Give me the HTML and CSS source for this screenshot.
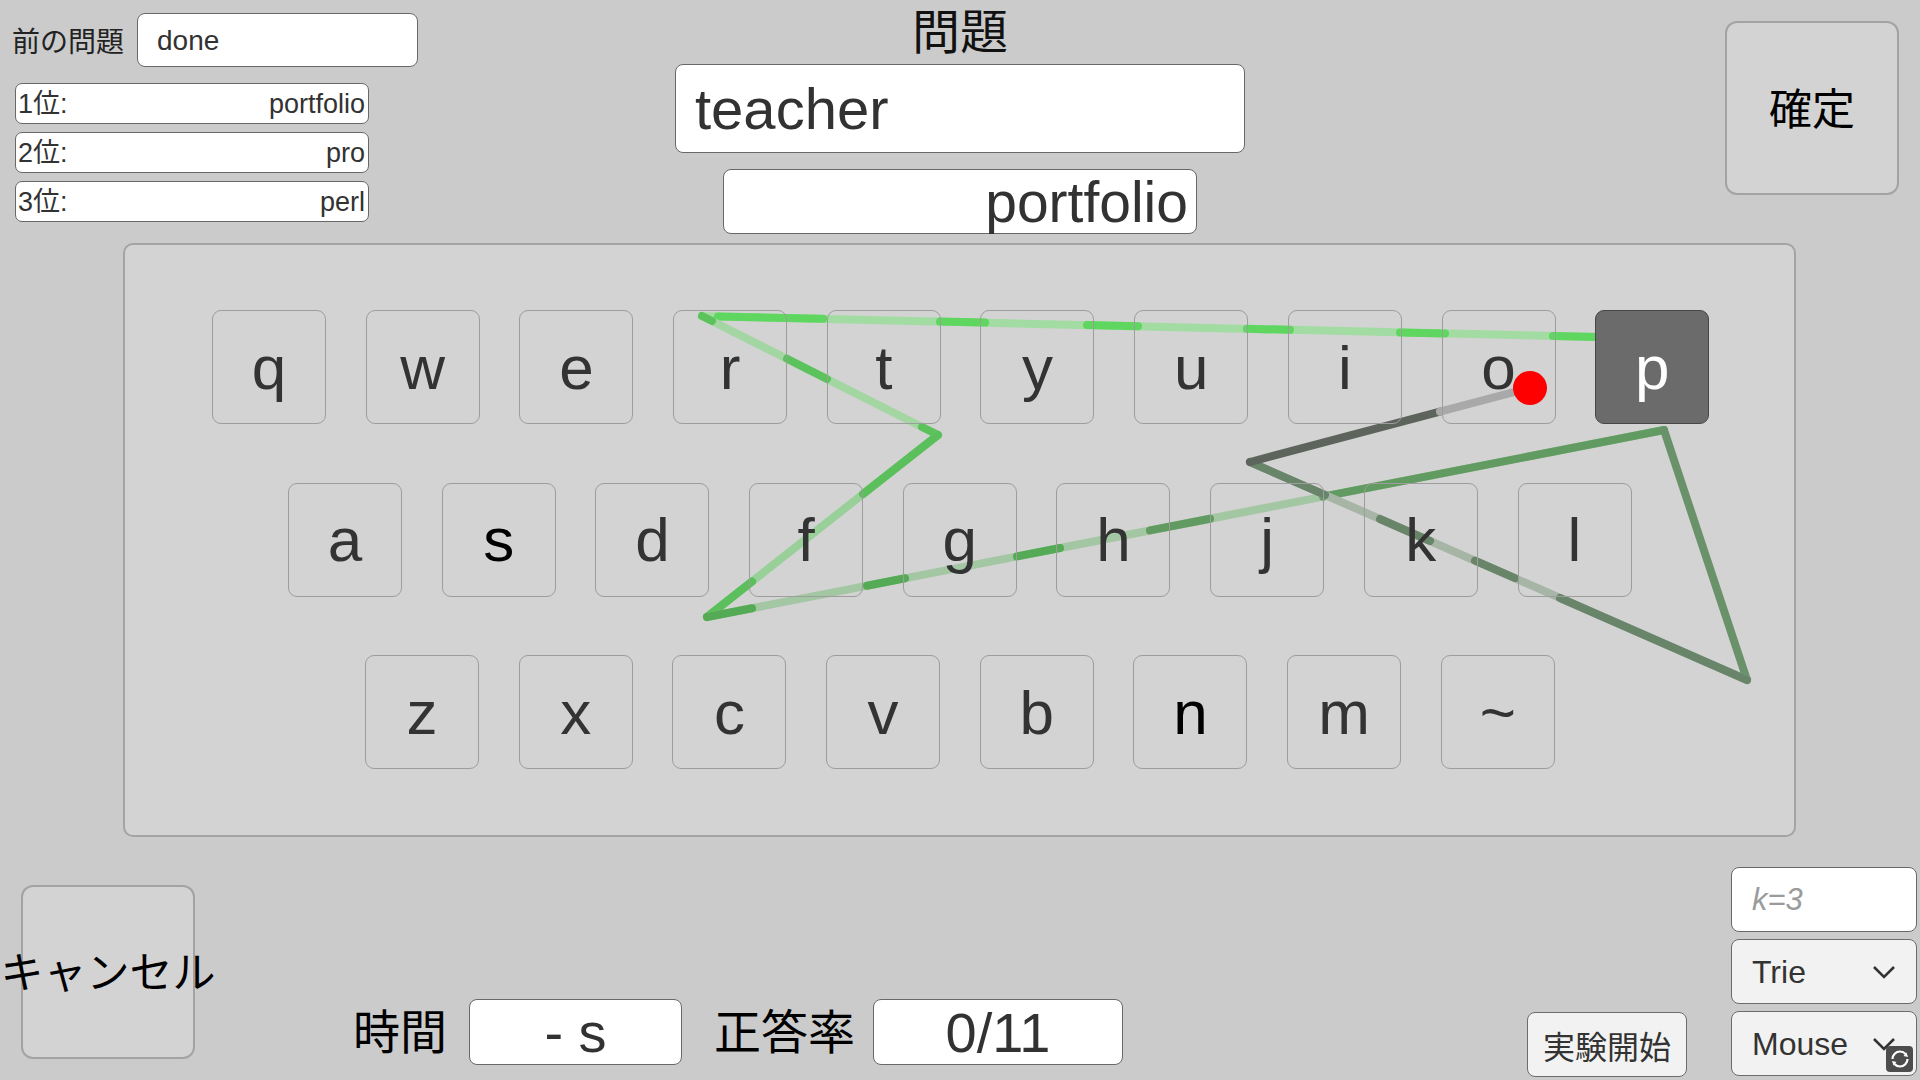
FILE: index.html
```html
<!DOCTYPE html>
<html lang="ja">
<head>
<meta charset="utf-8">
<title>Gesture Keyboard</title>
<link rel="stylesheet" href="styles.css">
</head>
<body>
<div class="screen">
  <header class="top">
    <section class="left-col">
      <div class="prev-row">
        <span class="prev-label">前の問題</span>
        <div class="field prev-field">done</div>
      </div>
      <ul class="ranks">
        <li class="field rank"><span>1位:</span><span>portfolio</span></li>
        <li class="field rank"><span>2位:</span><span>pro</span></li>
        <li class="field rank"><span>3位:</span><span>perl</span></li>
      </ul>
    </section>
    <section class="center-col">
      <h1 class="q-title">問題</h1>
      <div class="field q-field">teacher</div>
      <div class="field a-field">portfolio</div>
    </section>
    <section class="right-col">
      <button class="big-btn confirm">確定</button>
    </section>
  </header>

  <main class="kb-panel">
    <svg class="trail" viewBox="123 243 1673 594" width="1673" height="594" fill="none" stroke-linecap="round" stroke-linejoin="round" stroke-width="8">
      <!-- top row sweep -->
      <path d="M702 316L1630 337.8" stroke="#a2dca2"/>
      <path d="M718 316.4L823 318.8M940 321.6L985 322.6M1087 325L1138 326.2M1247 328.8L1290 329.8M1400 332.4L1445 333.4M1553 336L1630 337.8" stroke="#5fd65f"/>
      <!-- r to t/y -->
      <path d="M702 316L938 435" stroke="#a4d6a4"/>
      <path d="M702 316L712 321M787 358.8L827 379M922 427L938 435" stroke="#5cc35c"/>
      <!-- down to f -->
      <path d="M938 435L707 617" stroke="#99d099"/>
      <path d="M938 435L863 494M752 581.5L707 617" stroke="#5bbf5b"/>
      <!-- f up to p -->
      <path d="M707 617L1664 430" stroke="#a3c6a3"/>
      <path d="M707 617L752 608.2M867 585.7L905 578.3M1017 556.4L1060 548" stroke="#55ab55"/>
      <path d="M1150 530.4L1210 518.7M1323 496.6L1664 430" stroke="#619b61"/>
      <!-- p down to right -->
      <path d="M1664 430L1747 680" stroke="#6a926a"/>
      <!-- back left to j/i -->
      <path d="M1747 680L1250 462" stroke="#a6b5a6"/>
      <path d="M1747 680L1560 598M1515 578.2L1475 560.7M1430 541L1380 519M1325 494.9L1250 462" stroke="#68856a"/>
      <!-- up to o -->
      <path d="M1250 462L1440 411.6" stroke="#5c645c"/>
      <path d="M1440 411.6L1529 388" stroke="#a9a9a9"/>
    </svg>
    <div class="kb-row r1">
      <div class="key">q</div><div class="key">w</div><div class="key">e</div><div class="key">r</div><div class="key">t</div><div class="key">y</div><div class="key">u</div><div class="key">i</div><div class="key">o</div><div class="key pressed">p</div>
    </div>
    <div class="kb-row r2">
      <div class="key">a</div><div class="key hot">s</div><div class="key">d</div><div class="key">f</div><div class="key">g</div><div class="key">h</div><div class="key">j</div><div class="key">k</div><div class="key">l</div>
    </div>
    <div class="kb-row r3">
      <div class="key">z</div><div class="key">x</div><div class="key">c</div><div class="key">v</div><div class="key">b</div><div class="key hot">n</div><div class="key">m</div><div class="key">~</div>
    </div>
    <span class="cursor-dot"></span>
  </main>

  <footer class="bottom">
    <button class="big-btn cancel">キャンセル</button>
    <div class="stats">
      <span class="stat-label">時間</span>
      <div class="field stat-box time-box">- s</div>
      <span class="stat-label rate-label">正答率</span>
      <div class="field stat-box rate-box">0/11</div>
    </div>
    <div class="spacer"></div>
    <button class="start-btn">実験開始</button>
    <div class="right-stack">
      <div class="field k-input"><span class="placeholder">k=3</span></div>
      <div class="dropdown">
        <span>Trie</span>
        <svg class="chev" viewBox="0 0 24 14" width="24" height="14"><path d="M2 2L12 12L22 2" fill="none" stroke="#333" stroke-width="2.6"/></svg>
      </div>
      <div class="dropdown mouse">
        <span>Mouse</span>
        <svg class="chev" viewBox="0 0 24 14" width="24" height="14"><path d="M2 2L12 12L22 2" fill="none" stroke="#333" stroke-width="2.6"/></svg>
        <span class="sync-icon">
          <svg viewBox="0 0 26 26" width="26" height="26"><circle cx="13" cy="13" r="7.5" fill="none" stroke="#fff" stroke-width="2.2" stroke-dasharray="18 5.5"/><path d="M19.5 6.5L21 11L16.5 10Z" fill="#fff"/><path d="M6.5 19.5L5 15L9.5 16Z" fill="#fff"/></svg>
        </span>
      </div>
    </div>
  </footer>
</div>
</body>
</html>
```

FILE: styles.css
```css
* {
  box-sizing: border-box;
  margin: 0;
  padding: 0;
}

html, body {
  width: 1920px;
  height: 1080px;
  overflow: hidden;
}

body {
  background: #cbcbcb;
  font-family: "Liberation Sans", "Noto Sans CJK JP", sans-serif;
  color: #000;
}

.screen {
  width: 1920px;
  height: 1080px;
  display: flex;
  flex-direction: column;
}

/* ---------- top ---------- */
.top {
  height: 243px;
  display: grid;
  grid-template-columns: 675px 570px 1fr;
}

.field {
  background: #fff;
  border: 1.5px solid #686868;
  border-radius: 8px;
  color: #323232;
  line-height: 1;
}

.left-col {
  padding: 13px 0 0 12px;
}

.prev-row {
  display: flex;
  align-items: center;
  gap: 13px;
}

.prev-label {
  font-size: 28px;
  color: #222;
  white-space: nowrap;
}

.prev-field {
  width: 281px;
  height: 54px;
  font-size: 28px;
  display: flex;
  align-items: center;
  padding: 2px 0 0 19px;
}

.ranks {
  list-style: none;
  margin: 16px 0 0 3px;
  width: 354px;
  display: flex;
  flex-direction: column;
  gap: 8px;
}

.rank {
  height: 41px;
  display: flex;
  align-items: center;
  justify-content: space-between;
  padding: 1px 3px 0 2px;
  font-size: 27px;
  border-radius: 7px;
}

.center-col {
  display: flex;
  flex-direction: column;
  align-items: center;
}

.q-title {
  font-size: 48px;
  font-weight: normal;
  line-height: 57px;
  height: 61px;
  padding-top: 4px;
  color: #111;
}

.q-field {
  width: 570px;
  height: 89px;
  margin-top: 3px;
  font-size: 58px;
  display: flex;
  align-items: center;
  padding: 0 0 0 19px;
}

.a-field {
  width: 474px;
  height: 65px;
  margin-top: 16px;
  font-size: 57px;
  display: flex;
  align-items: center;
  justify-content: flex-end;
  padding: 2px 8px 0 0;
}

.right-col {
  display: flex;
  justify-content: flex-end;
  align-items: flex-start;
  padding: 21px 21px 0 0;
}

.big-btn {
  background: #d3d3d3;
  border: 2px solid #a3a3a3;
  border-radius: 12px;
  font-family: inherit;
  color: #000;
  display: flex;
  align-items: center;
  justify-content: center;
  white-space: nowrap;
}

.confirm {
  width: 174px;
  height: 174px;
  font-size: 43px;
  padding-bottom: 4px;
}

/* ---------- keyboard ---------- */
.kb-panel {
  margin-left: 123px;
  width: 1673px;
  height: 594px;
  background: #d3d3d3;
  border: 2px solid #a4a4a4;
  border-radius: 10px;
  position: relative;
  padding-top: 65px;
  display: flex;
  flex-direction: column;
  gap: 58.5px;
}

.kb-row {
  display: flex;
  gap: 39.7px;
  position: relative;
  z-index: 1;
}

.r1 { padding-left: 87px; }
.r2 { padding-left: 163px; }
.r3 { padding-left: 240px; }

.key {
  width: 114px;
  height: 114px;
  flex: none;
  background: transparent;
  border: 1.5px solid #9d9d9d;
  border-radius: 9px;
  display: flex;
  align-items: center;
  justify-content: center;
  font-size: 62px;
  line-height: 1;
  padding-top: 1px;
  color: #333;
}

.key.hot {
  color: #000;
}

.key.pressed {
  background: #6b6b6b;
  border-color: #474747;
  color: #fff;
}

.trail {
  position: absolute;
  left: -2px;
  top: -2px;
  z-index: 0;
  pointer-events: none;
}

.cursor-dot {
  position: absolute;
  left: 1388px;
  top: 126px;
  width: 34px;
  height: 34px;
  border-radius: 50%;
  background: #ff0000;
  z-index: 2;
}

/* ---------- bottom ---------- */
.bottom {
  flex: 1;
  display: flex;
  align-items: flex-start;
}

.cancel {
  margin: 48px 0 0 21px;
  width: 174px;
  height: 174px;
  font-size: 43px;
  padding-bottom: 6px;
  flex: none;
}

.stats {
  margin: 162px 0 0 158px;
  height: 66px;
  display: flex;
  align-items: center;
}

.stat-label {
  font-size: 47px;
  color: #000;
  white-space: nowrap;
  line-height: 1;
}

.stat-box {
  height: 66px;
  display: flex;
  align-items: center;
  justify-content: center;
  font-size: 56px;
  padding-top: 2px;
}

.time-box {
  width: 213px;
  margin-left: 22px;
}

.rate-label {
  margin-left: 32px;
}

.rate-box {
  width: 250px;
  margin-left: 18px;
}

.spacer {
  flex: 1;
}

.start-btn {
  margin-top: 175px;
  width: 160px;
  height: 65px;
  background: #f2f2f2;
  border: 1.5px solid #6c6c6c;
  border-radius: 8px;
  font-family: inherit;
  font-size: 32px;
  color: #333;
  display: flex;
  align-items: center;
  justify-content: center;
  flex: none;
}

.right-stack {
  margin: 30px 3px 0 44px;
  width: 186px;
  display: flex;
  flex-direction: column;
  gap: 7px;
  flex: none;
}

.k-input {
  height: 65px;
  display: flex;
  align-items: center;
  padding-left: 20px;
  font-size: 31px;
}

.placeholder {
  color: #9b9b9b;
  font-style: italic;
}

.dropdown {
  height: 65px;
  background: #f2f2f2;
  border: 1.5px solid #6c6c6c;
  border-radius: 8px;
  display: flex;
  align-items: center;
  justify-content: space-between;
  padding: 0 20px 0 20px;
  font-size: 32px;
  color: #333;
  line-height: 1;
  position: relative;
}

.chev {
  flex: none;
}

.sync-icon {
  position: absolute;
  right: 3px;
  bottom: 3px;
  width: 27px;
  height: 26px;
  background: #4d4d4d;
  border-radius: 4px;
  display: flex;
  align-items: center;
  justify-content: center;
}
```
